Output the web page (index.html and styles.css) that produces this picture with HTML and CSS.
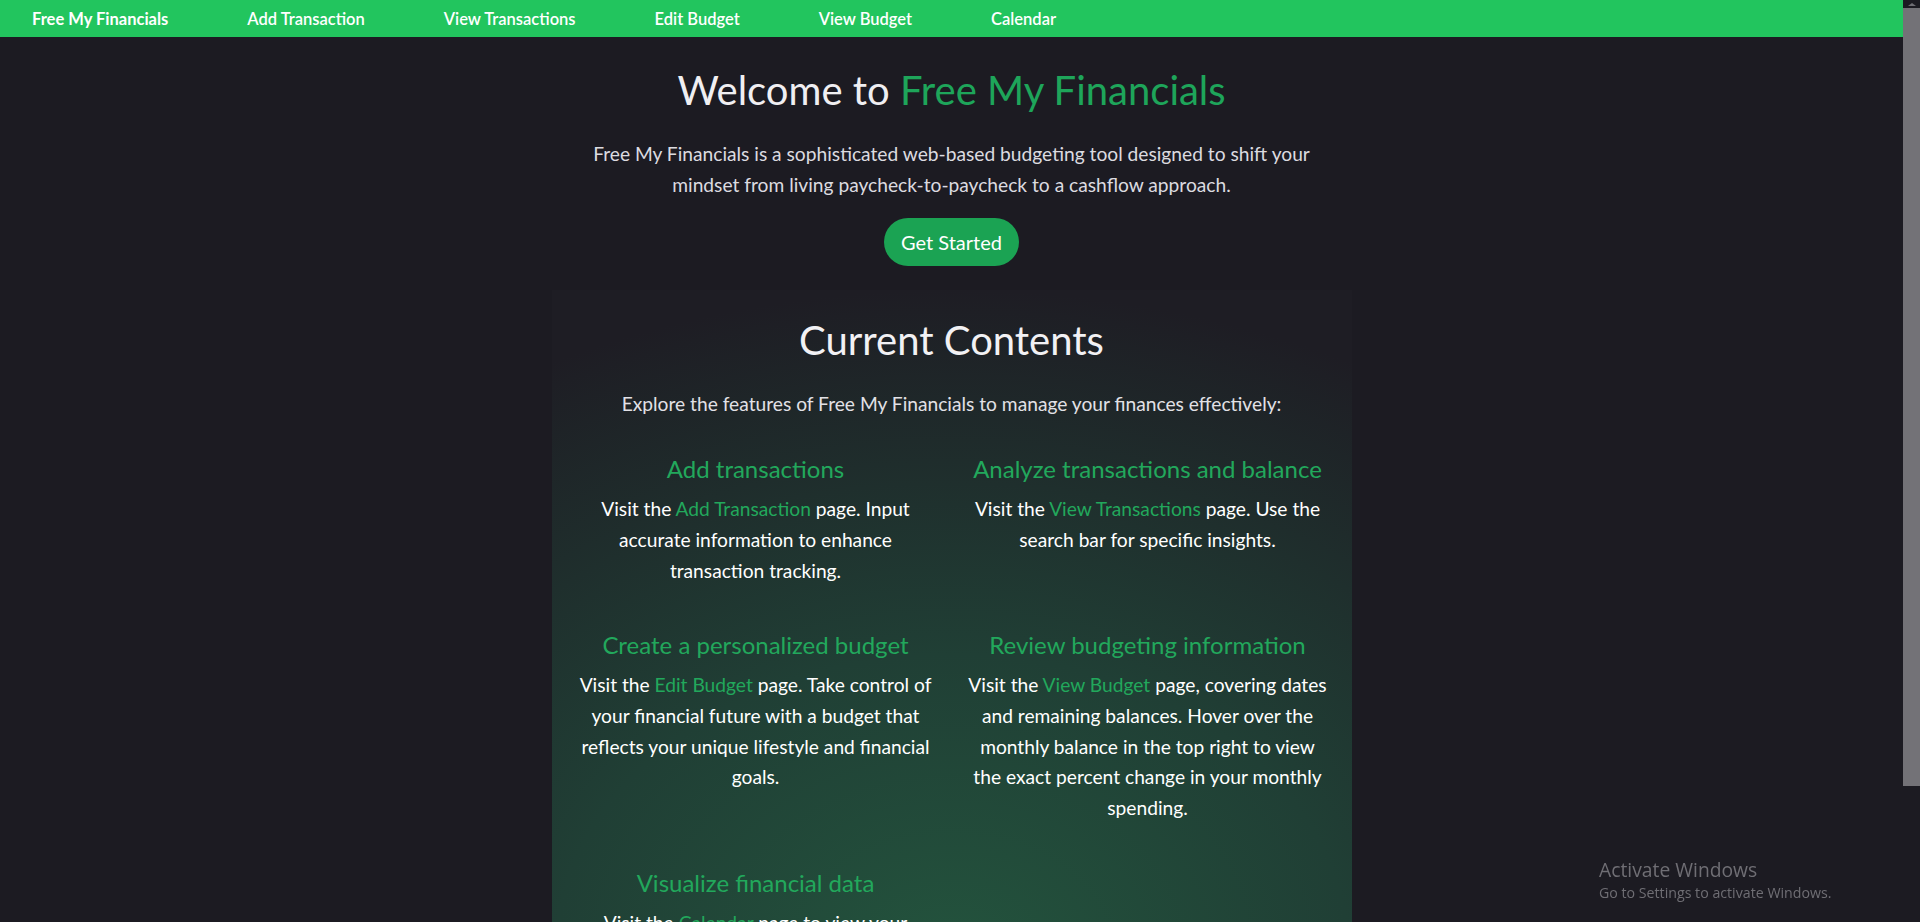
FILE: index.html
```html
<!DOCTYPE html>
<html lang="en">
<head>
<meta charset="utf-8">
<title>Free My Financials</title>
<link rel="stylesheet" href="styles.css">
</head>
<body>
<div class="shell">
  <div class="viewport">
    <nav class="topnav">
      <a class="brand" href="#">Free My Financials</a>
      <a href="#">Add Transaction</a>
      <a href="#">View Transactions</a>
      <a href="#">Edit Budget</a>
      <a href="#">View Budget</a>
      <a href="#">Calendar</a>
    </nav>
    <main class="main">
      <section class="hero">
        <h1 class="hero-title">Welcome to <span class="accent">Free My Financials</span></h1>
        <p class="hero-text">Free My Financials is a sophisticated web-based budgeting tool designed to shift your mindset from living paycheck-to-paycheck to a cashflow approach.</p>
        <a class="btn" href="#">Get Started</a>
      </section>
      <section class="contents">
        <h2 class="contents-title">Current Contents</h2>
        <p class="contents-lead">Explore the features of Free My Financials to manage your finances effectively:</p>
        <div class="features">
          <div class="feature">
            <h4>Add transactions</h4>
            <p>Visit the <a href="#">Add Transaction</a> page. Input accurate information to enhance transaction tracking.</p>
          </div>
          <div class="feature">
            <h4>Analyze transactions and balance</h4>
            <p>Visit the <a href="#">View Transactions</a> page. Use the search bar for specific insights.</p>
          </div>
          <div class="feature">
            <h4>Create a personalized budget</h4>
            <p>Visit the <a href="#">Edit Budget</a> page. Take control of your financial future with a budget that reflects your unique lifestyle and financial goals.</p>
          </div>
          <div class="feature">
            <h4>Review budgeting information</h4>
            <p>Visit the <a href="#">View Budget</a> page, covering dates and remaining balances. Hover over the monthly balance in the top right to view the exact percent change in your monthly spending.</p>
          </div>
          <div class="feature">
            <h4>Visualize financial data</h4>
            <p>Visit the <a href="#">Calendar</a> page to view your spending and income laid out day by day.</p>
          </div>
        </div>
      </section>
    </main>
  </div>
  <div class="scrollbar">
    <div class="sb-arrow"></div>
    <div class="sb-thumb"></div>
  </div>
</div>
<div class="watermark">
  <div class="wm-title">Activate Windows</div>
  <div class="wm-sub">Go to Settings to activate Windows.</div>
</div>
</body>
</html>
```
FILE: styles.css
```css
* { box-sizing: border-box; }
html, body { margin: 0; padding: 0; height: 100%; overflow: hidden; }
body {
  background: #1c1b22;
  color: #e6e6ea;
  font-family: "Lato", "Open Sans", sans-serif;
}
a { text-decoration: none; }

.shell { display: flex; height: 922px; }
.viewport { flex: 1; min-width: 0; height: 922px; overflow: hidden; }

.topnav {
  height: 37px;
  background: #22c55e;
  display: flex;
  align-items: center;
  padding-left: 32px;
  gap: 79px;
}
.topnav a {
  color: #ffffff;
  font-size: 16.5px;
  font-weight: 600;
  line-height: 20px;
}
.topnav .brand { font-weight: 700; }

.main { display: flex; flex-direction: column; align-items: center; }

.hero { display: flex; flex-direction: column; align-items: center; text-align: center; }
.hero-title {
  margin: 29px 0 0;
  font-size: 40px;
  line-height: 48px;
  font-weight: 400;
  color: #f0eff2;
}
.accent { color: #1ea55a; }
.hero-text {
  margin: 25px 0 0;
  max-width: 770px;
  font-size: 19.2px;
  line-height: 30.7px;
  color: #dcdbe0;
}
.btn {
  margin-top: 18px;
  height: 48px;
  padding: 0 17px;
  display: flex;
  align-items: center;
  border-radius: 24px;
  background: #1ba353;
  color: #ffffff;
  font-size: 20px;
}

.contents {
  margin-top: 24px;
  width: 800px;
  min-height: 780px;
  padding: 26px 20px 40px;
  text-align: center;
  background: radial-gradient(ellipse 110% 85% at 50% 85%, #23533d 0%, #203f35 45%, #1e1d24 100%);
}
.contents-title {
  margin: 0;
  font-size: 40px;
  line-height: 48px;
  font-weight: 400;
  color: #f2f1f4;
}
.contents-lead {
  margin: 25px 0 0;
  font-size: 19.2px;
  line-height: 30.7px;
  color: #e2e1e6;
}
.features {
  margin-top: 34px;
  display: grid;
  grid-template-columns: 1fr 1fr;
  column-gap: 24px;
  row-gap: 44px;
}
.feature { padding: 0 3px; }
.feature h4 {
  margin: 0 0 11px;
  font-size: 24px;
  line-height: 29px;
  font-weight: 400;
  color: #22a85c;
}
.feature p {
  margin: 0;
  font-size: 19.2px;
  line-height: 30.7px;
  color: #ffffff;
}
.feature a { color: #22a85c; }

.scrollbar {
  width: 17px;
  height: 922px;
  background: #1c1b22;
  display: flex;
  flex-direction: column;
  align-items: stretch;
}
.sb-arrow {
  height: 8px;
  display: flex;
  justify-content: center;
  align-items: center;
}
.sb-arrow::before {
  content: "";
  width: 0; height: 0;
  border-left: 4px solid transparent;
  border-right: 4px solid transparent;
  border-bottom: 3px solid #6e6d73;
}
.sb-thumb {
  height: 778px;
  background: #737277;
}

.watermark {
  position: fixed;
  left: 1599px;
  top: 857px;
  color: #6f6e74;
  font-family: "Open Sans", "Noto Sans", sans-serif;
}
.wm-title { font-size: 19.3px; line-height: 26px; }
.wm-sub { font-size: 14.2px; line-height: 20px; }
```
